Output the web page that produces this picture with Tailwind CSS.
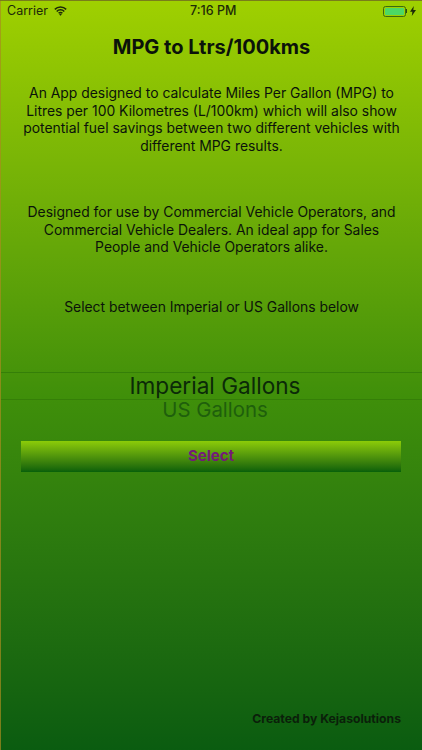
<!doctype html>
<html>
<head>
<meta charset="utf-8">
<script src="https://cdn.jsdelivr.net/npm/@tailwindcss/browser@4"></script>
</head>
<body>
<div class="w-[422px] h-[750px] overflow-hidden flex flex-col bg-gradient-to-b from-[#9fd000] via-[#3f8f0a] via-[53%] to-[#0a5c10] font-['Inter','Liberation_Sans',sans-serif] text-[#0b130a] border-t border-l border-[#a88c20]/70">
  <!-- status bar -->
  <div class="h-[20px] shrink-0 relative flex items-center justify-between pl-[6px] pr-[6px] text-[12.5px] text-[#1d2a08]">
    <div class="flex items-center gap-[6px]">
      <span>Carrier</span>
      <svg width="13" height="10" viewBox="0 0 13 10" fill="none" stroke="#1d2a08" stroke-width="1.5"><path d="M.8 3.4a8 8 0 0 1 11.4 0"/><path d="M2.7 5.4a5.3 5.3 0 0 1 7.6 0"/><path d="M4.6 7.3a2.6 2.6 0 0 1 3.8 0"/><path d="M6.5 9.8 5.2 8.4a1.9 1.9 0 0 1 2.6 0z" fill="#1d2a08" stroke="none"/></svg>
    </div>
    <span class="absolute left-[189px] font-medium">7:16 PM</span>
    <div class="flex items-center gap-[3px]">
      <div class="flex items-center">
        <div class="w-[23px] h-[11px] rounded-[2.5px] border border-[#3a6a10] p-px"><div class="w-full h-full rounded-[1px] bg-[#4cd964]"></div></div>
        <div class="w-px h-[4px] bg-[#2a4a10]"></div>
      </div>
      <svg width="6" height="10" viewBox="0 0 6 10" fill="#1d2a08"><path d="M3.8 0 0 5.7h2.4L1.8 10 6 4.1H3.3z"/></svg>
    </div>
  </div>
  <h1 class="mt-[14px] text-center text-[20px] leading-[24px] font-bold">MPG to Ltrs/100kms</h1>
  <p class="mt-[26px] px-[20px] text-center text-[13.9px] leading-[17.7px]">An App designed to calculate Miles Per Gallon (MPG) to Litres per 100 Kilometres (L/100km) which will also show potential fuel savings between two different vehicles with different MPG results.</p>
  <p class="mt-[48px] px-[20px] text-center text-[13.9px] leading-[17.7px]">Designed for use by Commercial Vehicle Operators, and Commercial Vehicle Dealers. An ideal app for Sales People and Vehicle Operators alike.</p>
  <p class="mt-[41px] text-center text-[13.9px] leading-[18px]">Select between Imperial or US Gallons below</p>
  <!-- picker -->
  <div class="mt-[56px] flex flex-col items-center">
    <div class="w-full h-[28px] pl-[7px] border-y border-[#357f08] flex items-center justify-center text-[22.6px] font-normal text-[#0b2a08]">Imperial Gallons</div>
    <div class="h-[20px] pl-[7px] flex items-center justify-center text-[20.4px] font-normal text-[#1f5f0c]">US Gallons</div>
  </div>
  <button class="mt-[21px] ml-[20px] mr-[21px] h-[31px] shrink-0 bg-gradient-to-b from-[#8ccc08] to-[#06600a] text-[15px] font-bold text-[#741a78]">Select</button>
  <div class="mt-auto mb-[24px] pr-[21px] text-right text-[12.2px] leading-[14px] font-bold text-[#0b1f0a]">Created by Kejasolutions</div>
</div>
</body>
</html>
